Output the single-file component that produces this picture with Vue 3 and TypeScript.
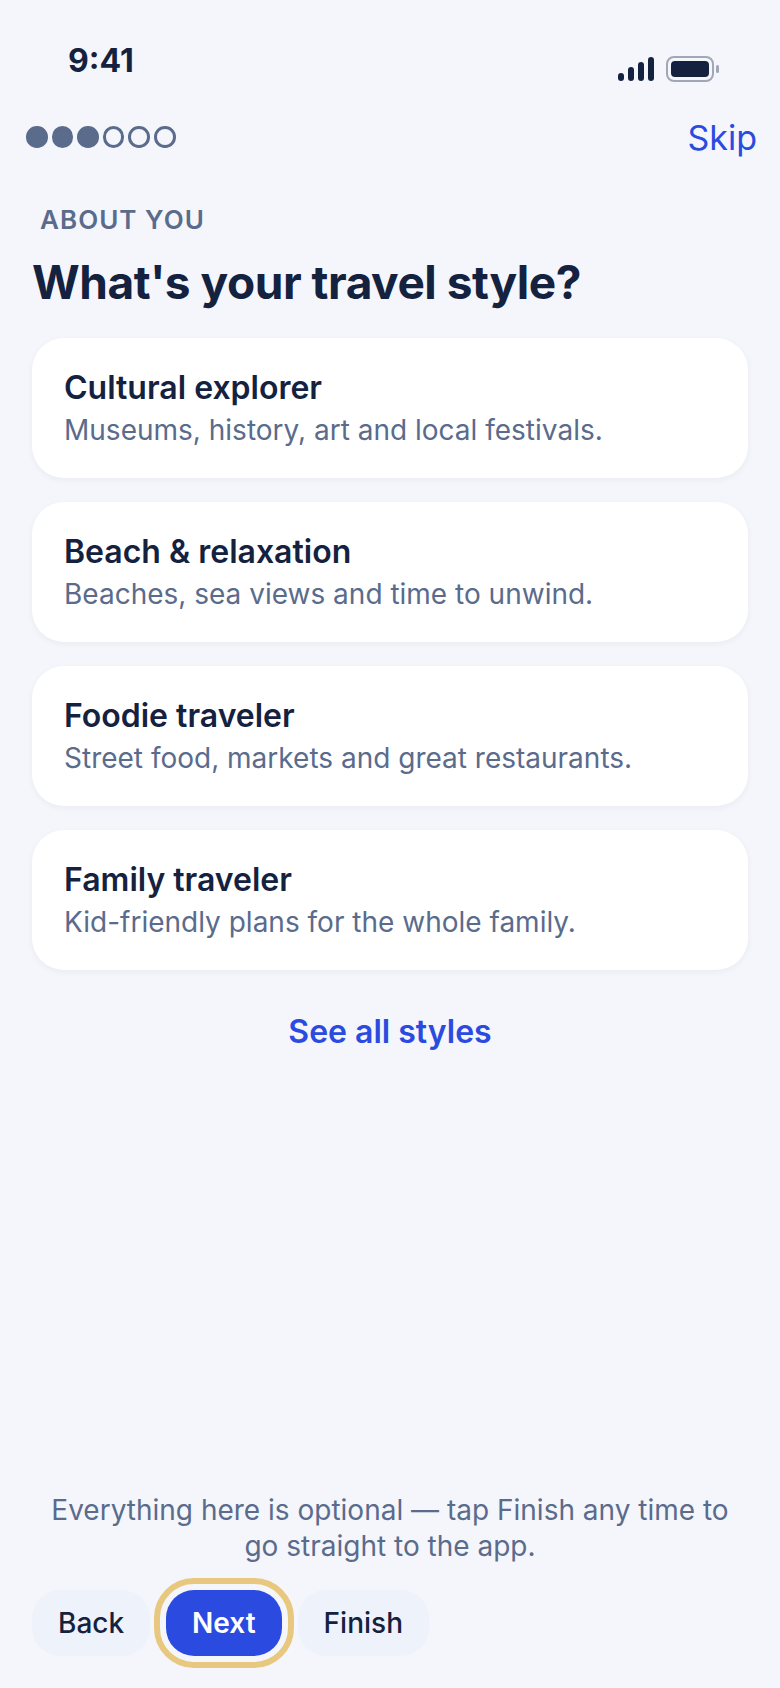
<script setup lang="ts">
const cards = [
  { title: 'Cultural explorer', desc: 'Museums, history, art and local festivals.' },
  { title: 'Beach & relaxation', desc: 'Beaches, sea views and time to unwind.' },
  { title: 'Foodie traveler', desc: 'Street food, markets and great restaurants.' },
  { title: 'Family traveler', desc: 'Kid-friendly plans for the whole family.' },
]
const dots = [true, true, true, false, false, false]
</script>

<template>
  <div class="screen">
    <div class="status">
      <span class="time">9:41</span>
      <div class="status-icons">
        <svg width="36" height="24" viewBox="0 0 36 24" class="signal">
          <rect x="0" y="16" width="6" height="8" rx="3" fill="#15223f" />
          <rect x="10" y="10" width="6" height="14" rx="3" fill="#15223f" />
          <rect x="20" y="5" width="6" height="19" rx="3" fill="#15223f" />
          <rect x="30" y="0" width="6" height="24" rx="3" fill="#15223f" />
        </svg>
        <svg width="54" height="26" viewBox="0 0 54 26" class="battery">
          <rect x="1" y="1" width="46" height="24" rx="7" fill="none" stroke="#a1a7b5" stroke-width="2" />
          <rect x="5" y="5" width="38" height="16" rx="4" fill="#15223f" />
          <rect x="50" y="9" width="3" height="8" rx="1.5" fill="#a1a7b5" />
        </svg>
      </div>
    </div>

    <div class="topbar">
      <div class="dots">
        <span v-for="(on, i) in dots" :key="i" class="dot" :class="{ on }"></span>
      </div>
      <a class="skip">Skip</a>
    </div>

    <div class="eyebrow">ABOUT YOU</div>
    <h1 class="heading">What's your travel style?</h1>

    <div class="cards">
      <div v-for="c in cards" :key="c.title" class="card">
        <div class="card-title">{{ c.title }}</div>
        <div class="card-desc">{{ c.desc }}</div>
      </div>
    </div>

    <div class="see-all">See all styles</div>

    <div class="spacer"></div>

    <p class="note">Everything here is optional — tap Finish any time to go straight to the app.</p>

    <div class="actions">
      <button class="btn">Back</button>
      <button class="btn primary">Next</button>
      <button class="btn">Finish</button>
    </div>
  </div>
</template>

<style>
html, body { margin: 0; background: #f4f6fb; }
</style>

<style scoped>
.screen {
  box-sizing: border-box;
  width: 780px;
  height: 1688px;
  background: #f4f6fb;
  font-family: Inter, "Noto Sans", sans-serif;
  color: #15223f;
  display: flex;
  flex-direction: column;
  padding: 0 32px 32px;
}
.status {
  height: 96px;
  display: flex;
  justify-content: space-between;
  align-items: flex-start;
  margin-right: 28px;
  padding: 0 0 0 36px;
}
.time {
  font-size: 32px;
  font-weight: 700;
  line-height: 40px;
  margin-top: 41px;
}
.status-icons {
  display: flex;
  align-items: center;
  gap: 12px;
  margin-top: 56px;
}
.signal, .battery { display: block; }
.topbar {
  display: flex;
  justify-content: space-between;
  align-items: center;
  height: 44px;
  margin: 19px -9px 0 -6px;
}
.dots { display: flex; gap: 4px; }
.dot {
  box-sizing: border-box;
  width: 21.6px;
  height: 21.6px;
  border-radius: 50%;
  border: 3px solid #5a6b8c;
}
.dot.on { background: #5a6b8c; }
.skip {
  font-size: 34px;
  color: #2b4be0;
  line-height: 44px;
  margin-top: 2px;
}
.eyebrow {
  margin: 44px 0 0 8px;
  font-size: 26px;
  line-height: 34px;
  font-weight: 600;
  letter-spacing: 1.04px;
  color: #5a6b8c;
}
.heading {
  margin: 16px 0 0;
  font-size: 46px;
  line-height: 58px;
  letter-spacing: -0.46px;
  font-weight: 700;
  color: #15223f;
}
.cards {
  margin-top: 27px;
  display: flex;
  flex-direction: column;
  gap: 24px;
}
.card {
  box-sizing: border-box;
  background: #fff;
  border-radius: 32px;
  padding: 30px 32px;
  box-shadow: 0 2px 6px rgba(21, 34, 63, 0.05);
}
.card-title {
  font-size: 32px;
  line-height: 40px;
  font-weight: 600;
  color: #15223f;
}
.card-desc {
  margin-top: 4px;
  font-size: 28px;
  line-height: 36px;
  color: #5a6b8c;
}
.see-all {
  margin-top: 42px;
  text-align: center;
  font-size: 32px;
  line-height: 40px;
  font-weight: 600;
  color: #2b4be0;
}
.spacer { flex: 1; }
.note {
  margin: 0 0 26px;
  text-align: center;
  font-size: 28px;
  line-height: 36px;
  color: #5a6b8c;
}
.actions {
  display: flex;
  gap: 16px;
}
.btn {
  box-sizing: border-box;
  height: 66px;
  padding: 0 26px;
  border: 0;
  border-radius: 28px;
  background: #eef2fb;
  color: #15223f;
  font-family: inherit;
  font-size: 28px;
  font-weight: 500;
}
.btn.primary {
  background: #2b4be0;
  color: #fff;
  font-weight: 600;
  outline: 6px solid #e8c77f;
  outline-offset: 6px;
}
</style>
